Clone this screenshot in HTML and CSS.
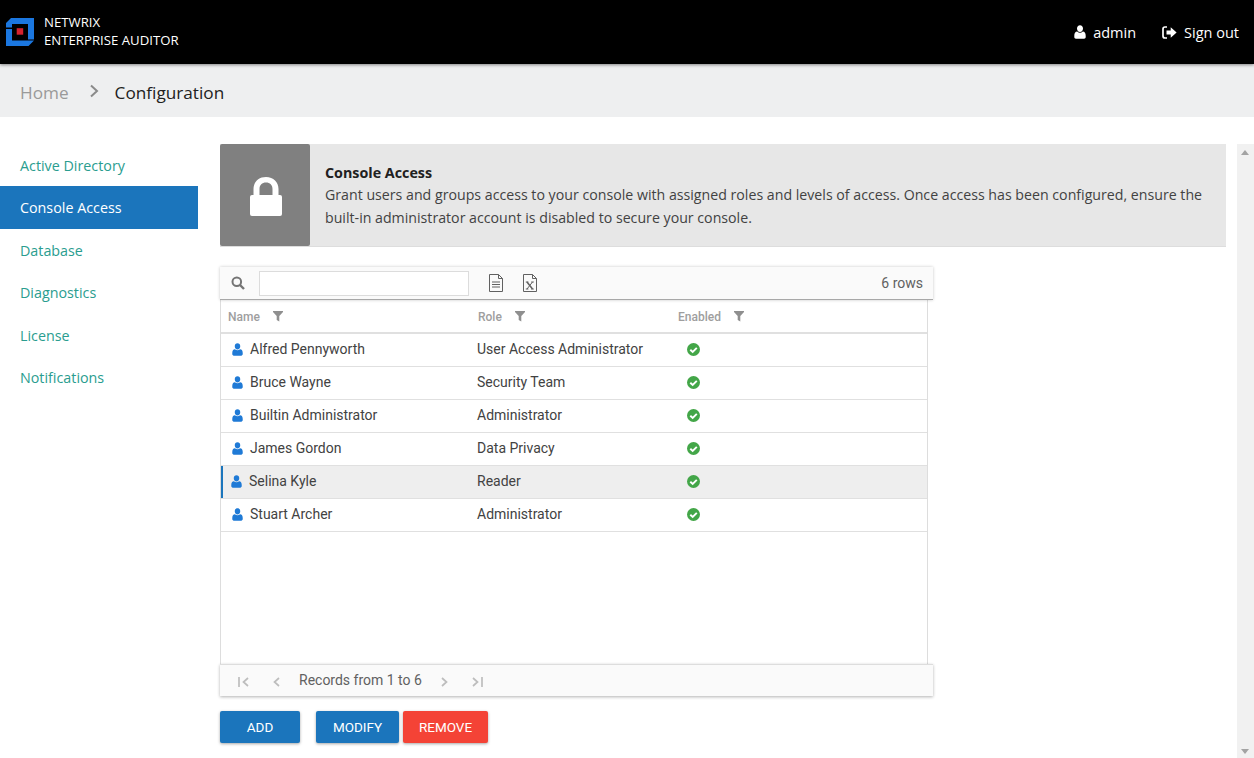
FILE: index.html
```html
<!DOCTYPE html>
<html lang="en">
<head>
<meta charset="utf-8">
<title>Console Access</title>
<link rel="stylesheet" href="styles.css">
</head>
<body>
<svg class="defs" width="0" height="0" aria-hidden="true">
  <defs>
    <symbol id="user" viewBox="0 0 12 14"><path d="M6 0.3c1.8 0 3 1.4 3 3.2S7.8 7 6 7 3 5.3 3 3.5 4.2 0.3 6 0.3zM3.2 6.6C4 7.4 5 7.8 6 7.8s2-.4 2.8-1.2c1.9.2 2.9 1.6 2.9 4.2v1.2c0 1-.7 1.7-1.600 1.700H1.900c-.9 0-1.600-.7-1.600-1.700v-1.200c0-2.600 1-4 2.900-4.200z"/></symbol>
    <symbol id="funnel" viewBox="0 0 10 11"><path d="M0 0h10v1L6.300 5v5.600L3.700 9V5L0 1z"/></symbol>
    <symbol id="check" viewBox="0 0 13 13"><circle cx="6.500" cy="6.500" r="6.500" fill="#43a648"/><path d="M3.300 6.700l2.400 2.300L9.800 4.800" fill="none" stroke="#fff" stroke-width="1.900"/></symbol>
  </defs>
</svg>
<header class="topbar">
  <div class="brand">
    <svg class="logo" width="28" height="28" viewBox="0 0 28 28">
      <path d="M5 0H28V21.500H22V6H6V9.500H0V5z" fill="#1b77e0"/>
      <path d="M0 11H6V22.500H28L22.500 28H0z" fill="#1b77e0"/>
      <rect x="10.700" y="10.200" width="6.500" height="6.500" fill="#d5222e"/>
    </svg>
    <div class="brand-text"><div>NETWRIX</div><div>ENTERPRISE AUDITOR</div></div>
  </div>
  <nav class="account">
    <span class="account-item">
      <svg class="account-icon" width="12" height="14"><use href="#user"/></svg>admin
    </span>
    <span class="account-item">
      <svg class="account-icon" width="15" height="13" viewBox="0 0 15 13"><path d="M5 1H3C1.700 1 1 1.800 1 3v7c0 1.200.7 2 2 2h2" fill="none" stroke="#fff" stroke-width="1.700"/><path d="M4.500 4.500h4.200V1.200L14.600 6.500 8.700 11.800V8.500H4.500z" fill="#fff"/></svg>Sign out
    </span>
  </nav>
</header>
<div class="crumbs">
  <span class="crumb-home">Home</span>
  <svg class="crumb-sep" width="10" height="14" viewBox="0 0 10 14"><path d="M2 1.500l6 5.500-6 5.500" fill="none" stroke="#8a8a8a" stroke-width="2"/></svg>
  <span class="crumb-current">Configuration</span>
</div>
<div class="page">
  <aside class="side">
    <a class="side-link">Active Directory</a>
    <a class="side-link active">Console Access</a>
    <a class="side-link">Database</a>
    <a class="side-link">Diagnostics</a>
    <a class="side-link">License</a>
    <a class="side-link">Notifications</a>
  </aside>
  <main class="content">
    <section class="banner">
      <div class="banner-icon">
        <svg width="32" height="39" viewBox="0 0 32 39"><path d="M3.500 20V12C3.500 5 8.500 0 16 0s12.500 5 12.500 12v8h-6v-8c0-4-2.500-6.500-6.500-6.500S9.500 8 9.500 12v8z" fill="#fff"/><rect x="0" y="18" width="32" height="21" rx="2" fill="#fff"/></svg>
      </div>
      <div class="banner-text">
        <h1 class="banner-title">Console Access</h1>
        <p class="banner-desc">Grant users and groups access to your console with assigned roles and levels of access. Once access has been configured, ensure the built-in administrator account is disabled to secure your console.</p>
      </div>
    </section>
    <section class="grid-wrap">
      <div class="toolbar">
        <svg class="search-icon" width="14" height="14" viewBox="0 0 14 14"><circle cx="5.800" cy="5.800" r="4.300" fill="none" stroke="#757575" stroke-width="2"/><path d="M9 9l4 4" stroke="#757575" stroke-width="2.400"/></svg>
        <div class="search-box"></div>
        <svg class="file-icon" width="16" height="18" viewBox="0 0 16 18"><path d="M1.500.5h9l4 4v13h-13z M10.500.5v4h4" fill="none" stroke="#616161"/><path d="M4 8h8M4 10.500h8M4 13h8" stroke="#616161"/></svg>
        <svg class="file-icon" width="16" height="18" viewBox="0 0 16 18"><path d="M1.500.5h9l4 4v13h-13z M10.500.5v4h4" fill="none" stroke="#616161"/><path d="M5 8l5.500 7" stroke="#616161" stroke-width="1.500" fill="none"/><path d="M10.500 8l-5.500 7M3.800 8h2.600M9.200 8h2.600M3.800 15h2.600M9.200 15h2.600" stroke="#616161" fill="none"/></svg>
        <span class="row-count">6 rows</span>
      </div>
      <div class="table">
        <div class="thead">
          <div class="th col-name">Name<svg class="funnel" width="10" height="11"><use href="#funnel"/></svg></div>
          <div class="th col-role">Role<svg class="funnel" width="10" height="11"><use href="#funnel"/></svg></div>
          <div class="th col-enabled">Enabled<svg class="funnel" width="10" height="11"><use href="#funnel"/></svg></div>
        </div>
        <div class="tr"><div class="td col-name"><svg class="user" width="11" height="13"><use href="#user"/></svg>Alfred Pennyworth</div><div class="td col-role">User Access Administrator</div><div class="td col-enabled"><svg width="13" height="13"><use href="#check"/></svg></div></div>
        <div class="tr"><div class="td col-name"><svg class="user" width="11" height="13"><use href="#user"/></svg>Bruce Wayne</div><div class="td col-role">Security Team</div><div class="td col-enabled"><svg width="13" height="13"><use href="#check"/></svg></div></div>
        <div class="tr"><div class="td col-name"><svg class="user" width="11" height="13"><use href="#user"/></svg>Builtin Administrator</div><div class="td col-role">Administrator</div><div class="td col-enabled"><svg width="13" height="13"><use href="#check"/></svg></div></div>
        <div class="tr"><div class="td col-name"><svg class="user" width="11" height="13"><use href="#user"/></svg>James Gordon</div><div class="td col-role">Data Privacy</div><div class="td col-enabled"><svg width="13" height="13"><use href="#check"/></svg></div></div>
        <div class="tr selected"><div class="td col-name"><svg class="user" width="11" height="13"><use href="#user"/></svg>Selina Kyle</div><div class="td col-role">Reader</div><div class="td col-enabled"><svg width="13" height="13"><use href="#check"/></svg></div></div>
        <div class="tr"><div class="td col-name"><svg class="user" width="11" height="13"><use href="#user"/></svg>Stuart Archer</div><div class="td col-role">Administrator</div><div class="td col-enabled"><svg width="13" height="13"><use href="#check"/></svg></div></div>
      </div>
      <div class="pager">
        <svg class="pg pg-first" width="11" height="10" viewBox="0 0 11 10"><path d="M1 0v10M10 1L5.500 5l4.500 4" fill="none" stroke="#bdbdbd" stroke-width="1.700"/></svg>
        <svg class="pg pg-prev" width="7" height="10" viewBox="0 0 7 10"><path d="M6 1L1.500 5 6 9" fill="none" stroke="#bdbdbd" stroke-width="1.700"/></svg>
        <span class="pager-text">Records from 1 to 6</span>
        <svg class="pg pg-next" width="7" height="10" viewBox="0 0 7 10"><path d="M1 1l4.500 4L1 9" fill="none" stroke="#bdbdbd" stroke-width="1.700"/></svg>
        <svg class="pg pg-last" width="11" height="10" viewBox="0 0 11 10"><path d="M10 0v10M1 1l4.500 4L1 9" fill="none" stroke="#bdbdbd" stroke-width="1.700"/></svg>
      </div>
    </section>
    <div class="actions">
      <button class="btn btn-add">ADD</button>
      <button class="btn btn-modify">MODIFY</button>
      <button class="btn btn-remove">REMOVE</button>
    </div>
  </main>
  <div class="scrollbar">
    <span class="arrow-up"></span>
    <span class="arrow-down"></span>
  </div>
</div>
</body>
</html>
```
FILE: styles.css
```css
* { box-sizing: border-box; }
html, body { margin: 0; height: 100%; overflow: hidden; }
body { font-family: Roboto, "Liberation Sans", sans-serif; background: #fff; color: #424242; display: flex; flex-direction: column; height: 758px; }
.defs { position: absolute; }

.topbar { flex: 0 0 64px; background: #000; color: #fff; display: flex; align-items: center; justify-content: space-between; padding: 0 15px 0 6px; box-shadow: 0 1px 3px rgba(0,0,0,.45); position: relative; }
.brand { display: flex; align-items: center; gap: 10px; margin-top: -1px; }
.logo { display: block; }
.brand-text { font-family: "Open Sans", "Noto Sans", sans-serif; font-size: 13.200px; line-height: 18px; margin-top: -2px; }
.account { display: flex; gap: 26px; font-family: "Open Sans", "Noto Sans", sans-serif; font-size: 14.500px; }
.account-item { display: flex; align-items: center; gap: 7px; }
.account-icon { fill: #fff; display: block; }

.crumbs { flex: 0 0 53px; background: #eeeff0; display: flex; align-items: center; padding: 3px 20px 0; font-family: "Open Sans", "Noto Sans", sans-serif; font-size: 17.200px; }
.crumb-home { color: #9a9a9a; }
.crumb-sep { margin: 0 16px 2px 20px; }
.crumb-current { color: #212121; }

.page { flex: 1; display: flex; min-height: 0; padding-top: 27px; }
.side { flex: 0 0 198px; font-family: "Open Sans", "Noto Sans", sans-serif; font-size: 14.300px; }
.side-link { display: flex; align-items: center; height: 42.500px; padding-left: 20px; color: #2a9d8f; }
.side-link.active { background: #1b75bc; color: #fff; margin-top: -.5px; height: 43px; }

.content { flex: 0 0 1006px; margin-left: 22px; }
.banner { display: flex; height: 103px; background: #e7e7e7; border-bottom: 1px solid #ddd; }
.banner-icon { flex: 0 0 90px; height: 102px; background: #808080; border-radius: 2px; display: flex; align-items: center; justify-content: center; padding: 3px 0 0 2px; }
.banner-text { padding: 18px 20px 0 15px; font-family: "Open Sans", "Noto Sans", sans-serif; font-size: 14.180px; line-height: 23px; color: #424242; }
.banner-title { margin: 0; font-size: 14.300px; font-weight: 700; color: #212121; line-height: 21px; }
.banner-desc { margin: 0; }

.grid-wrap { width: 713px; margin-top: 20px; }
.toolbar { height: 33px; background: #fafafa; border-bottom: 1px solid #a8a8a8; box-shadow: 0 0 3px rgba(0,0,0,.22); display: flex; align-items: center; padding: 0 10px 0 11px; font-size: 14px; position: relative; }
.search-icon { margin-right: 14px; }
.search-box { width: 210px; height: 25px; background: #fff; border: 1px solid #dcdcdc; margin-right: 19px; }
.file-icon { margin-right: 18px; }
.row-count { margin-left: auto; color: #616161; }

.table { width: 708px; height: 364px; border-left: 1px solid #ddd; border-right: 1px solid #ddd; background: #fff; }
.thead { display: flex; height: 34px; border-bottom: 2px solid #e0e0e0; padding-top: 1px; }
.th { display: flex; align-items: center; font-size: 12px; font-weight: 500; color: #9e9e9e; padding-left: 7px; }
.funnel { fill: #8f8f8f; margin-left: 13px; }
.col-name { width: 250px; }
.col-role { width: 200px; }
.col-enabled { width: 96px; }
.tr { display: flex; height: 33px; border-bottom: 1px solid #e0e0e0; padding-bottom: 2px; }
.td { display: flex; align-items: center; font-size: 14px; color: #424242; padding-left: 6px; }
.td.col-name { padding-left: 11px; }
.td.col-enabled { padding-left: 16px; }
.user { fill: #1f7ad6; margin-right: 7px; }
.selected { background: #eeeeee; box-shadow: inset 2px 0 0 #1b75bc; }
.selected .td.col-name { padding-left: 10px; }

.pager { height: 32px; background: #fafafa; box-shadow: 0 1px 3px rgba(0,0,0,.3); border-top: 1px solid #ddd; display: flex; align-items: center; padding: 0 0 2px 18px; font-size: 14px; color: #616161; }
.pg { display: block; margin-top: 4px; }
.pg-prev { margin-left: 24px; }
.pager-text { margin: 0 19px; }
.pg-last { margin-left: 24px; }

.actions { display: flex; margin-top: 15px; }
.btn { height: 32px; border: 0; border-radius: 2px; color: #fff; font-family: Roboto, "Liberation Sans", sans-serif; font-size: 13.500px; padding: 0; box-shadow: 0 1px 3px rgba(0,0,0,.35); }
.btn-add { width: 80px; background: #1b75bc; }
.btn-modify { width: 83px; background: #1b75bc; margin-left: 16px; }
.btn-remove { width: 85px; background: #f44336; margin-left: 4px; }

.scrollbar { flex: 0 0 17px; margin-left: 11px; background: #f1f1f1; position: relative; }
.arrow-up, .arrow-down { position: absolute; left: 4px; width: 0; height: 0; border-left: 4px solid transparent; border-right: 4px solid transparent; }
.arrow-up { top: 6px; border-bottom: 5px solid #a3a3a3; }
.arrow-down { bottom: 4px; border-top: 5px solid #a3a3a3; }
```
